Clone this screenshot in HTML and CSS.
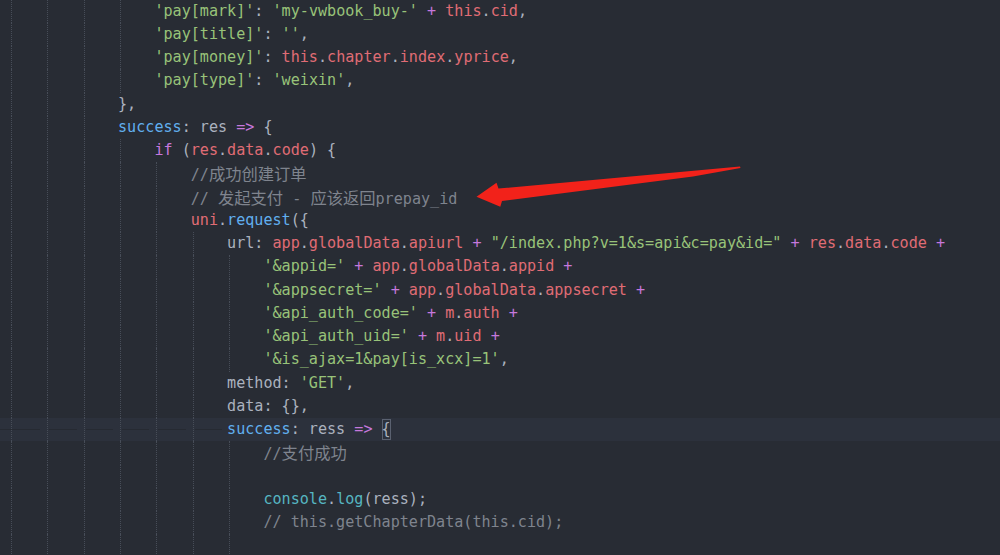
FILE: index.html
```html
<!DOCTYPE html>
<html lang="zh">
<head>
<meta charset="utf-8">
<title>Editor</title>
<link rel="stylesheet" href="styles.css">
</head>
<body>
<div class="editor">
  <div class="ln"><i></i><i></i><i></i><i></i><span class="code"><span class="s">'pay[mark]'</span>: <span class="s">'my-vwbook_buy-'</span> <span class="k">+</span> <span class="p">this</span>.<span class="p">cid</span>,</span></div>
  <div class="ln"><i></i><i></i><i></i><i></i><span class="code"><span class="s">'pay[title]'</span>: <span class="s">''</span>,</span></div>
  <div class="ln"><i></i><i></i><i></i><i></i><span class="code"><span class="s">'pay[money]'</span>: <span class="p">this</span>.<span class="p">chapter</span>.<span class="p">index</span>.<span class="p">yprice</span>,</span></div>
  <div class="ln"><i></i><i></i><i></i><i></i><span class="code"><span class="s">'pay[type]'</span>: <span class="s">'weixin'</span>,</span></div>
  <div class="ln"><i></i><i></i><i></i><span class="code">},</span></div>
  <div class="ln"><i></i><i></i><i></i><span class="code"><span class="f">success</span>: res <span class="k">=&gt;</span> {</span></div>
  <div class="ln"><i></i><i></i><i></i><i></i><span class="code"><span class="k">if</span> (<span class="p">res</span>.<span class="p">data</span>.<span class="p">code</span>) {</span></div>
  <div class="ln"><i></i><i></i><i></i><i></i><i></i><span class="code c">//<span class="cjk">成功创建订单</span></span></div>
  <div class="ln"><i></i><i></i><i></i><i></i><i></i><span class="code c">// <span class="cjk">发起支付</span> - <span class="cjk">应该返回</span>prepay_id</span></div>
  <div class="ln"><i></i><i></i><i></i><i></i><i></i><span class="code"><span class="p">uni</span>.<span class="f">request</span>({</span></div>
  <div class="ln"><i></i><i></i><i></i><i></i><i></i><i></i><span class="code">url: <span class="p">app</span>.<span class="p">globalData</span>.<span class="p">apiurl</span> <span class="k">+</span> <span class="s">"/index.php?v=1&amp;s=api&amp;c=pay&amp;id="</span> <span class="k">+</span> <span class="p">res</span>.<span class="p">data</span>.<span class="p">code</span> <span class="k">+</span></span></div>
  <div class="ln"><i></i><i></i><i></i><i></i><i></i><i></i><i></i><span class="code"><span class="s">'&amp;appid='</span> <span class="k">+</span> <span class="p">app</span>.<span class="p">globalData</span>.<span class="p">appid</span> <span class="k">+</span></span></div>
  <div class="ln"><i></i><i></i><i></i><i></i><i></i><i></i><i></i><span class="code"><span class="s">'&amp;appsecret='</span> <span class="k">+</span> <span class="p">app</span>.<span class="p">globalData</span>.<span class="p">appsecret</span> <span class="k">+</span></span></div>
  <div class="ln"><i></i><i></i><i></i><i></i><i></i><i></i><i></i><span class="code"><span class="s">'&amp;api_auth_code='</span> <span class="k">+</span> <span class="p">m</span>.<span class="p">auth</span> <span class="k">+</span></span></div>
  <div class="ln"><i></i><i></i><i></i><i></i><i></i><i></i><i></i><span class="code"><span class="s">'&amp;api_auth_uid='</span> <span class="k">+</span> <span class="p">m</span>.<span class="p">uid</span> <span class="k">+</span></span></div>
  <div class="ln"><i></i><i></i><i></i><i></i><i></i><i></i><i></i><span class="code"><span class="s">'&amp;is_ajax=1&amp;pay[is_xcx]=1'</span>,</span></div>
  <div class="ln"><i></i><i></i><i></i><i></i><i></i><i></i><span class="code">method: <span class="s">'GET'</span>,</span></div>
  <div class="ln"><i></i><i></i><i></i><i></i><i></i><i></i><span class="code">data: {},</span></div>
  <div class="ln cur"><i></i><i></i><i></i><i></i><i></i><i></i><span class="code"><span class="f">success</span>: ress <span class="k">=&gt;</span> <span class="bm">{</span></span></div>
  <div class="ln"><i></i><i></i><i></i><i></i><i></i><i></i><i></i><span class="code c">//<span class="cjk">支付成功</span></span></div>
  <div class="ln"><i></i><i></i><i></i><i></i><i></i><i></i><i></i><span class="code"></span></div>
  <div class="ln"><i></i><i></i><i></i><i></i><i></i><i></i><i></i><span class="code"><span class="y">console</span>.<span class="y">log</span>(ress);</span></div>
  <div class="ln"><i></i><i></i><i></i><i></i><i></i><i></i><i></i><span class="code c">// this.getChapterData(this.cid);</span></div>
  <div class="ln"><i></i><i></i><i></i><i></i><i></i><i></i><i></i><span class="code"></span></div>
</div>
<svg class="arrow" width="1000" height="555" viewBox="0 0 1000 555" aria-hidden="true">
  <polygon points="476.5,196.8 496.5,182.8 498.5,188.6 740,166.6 740.5,168 693,176.6 502,201 500.3,206.7" fill="#f2221a"/>
</svg>
</body>
</html>
```

FILE: styles.css
```css
html, body {
  margin: 0;
  padding: 0;
  background: #282c34;
  width: 1000px;
  height: 555px;
  overflow: hidden;
}

body {
  position: relative;
}

.editor {
  font-family: "DejaVu Sans Mono", "Noto Sans CJK SC", monospace;
  font-size: 15.1px;
  color: #abb2bf;
  padding-left: 9px;
  margin-top: -0.5px;
}

.ln {
  display: flex;
  height: 23.25px;
  line-height: 23.25px;
  white-space: pre;
}

.ln.cur {
  background: #2c313c;
  margin-left: -9px;
  padding-left: 9px;
}

.ln i {
  flex: 0 0 4ch;
  position: relative;
}

.ln i::before {
  content: "";
  position: absolute;
  left: 2px;
  top: 0;
  bottom: 0;
  border-left: 1px dotted #474d58;
}

.ln.cur i::after {
  content: "";
  position: absolute;
  left: 4px;
  right: 5px;
  top: 11px;
  height: 1px;
  background: #262a32;
}

.ln.cur i:first-child::after {
  left: -9px;
}

.code {
  white-space: pre;
}

.s { color: #98c379; }
.p { color: #e06c75; }
.k { color: #c678dd; }
.f { color: #61afef; }
.y { color: #56b6c2; }
.c { color: #7f848e; }

.cjk {
  font-family: "Noto Sans CJK SC", sans-serif;
  font-size: 16.3px;
}

.bm {
  display: inline-block;
  height: 21px;
  line-height: 21px;
  vertical-align: top;
  margin-top: 1px;
  box-shadow: inset 0 0 0 1px #5a6170;
}

.arrow {
  position: absolute;
  left: 0;
  top: 0;
  pointer-events: none;
}
```
